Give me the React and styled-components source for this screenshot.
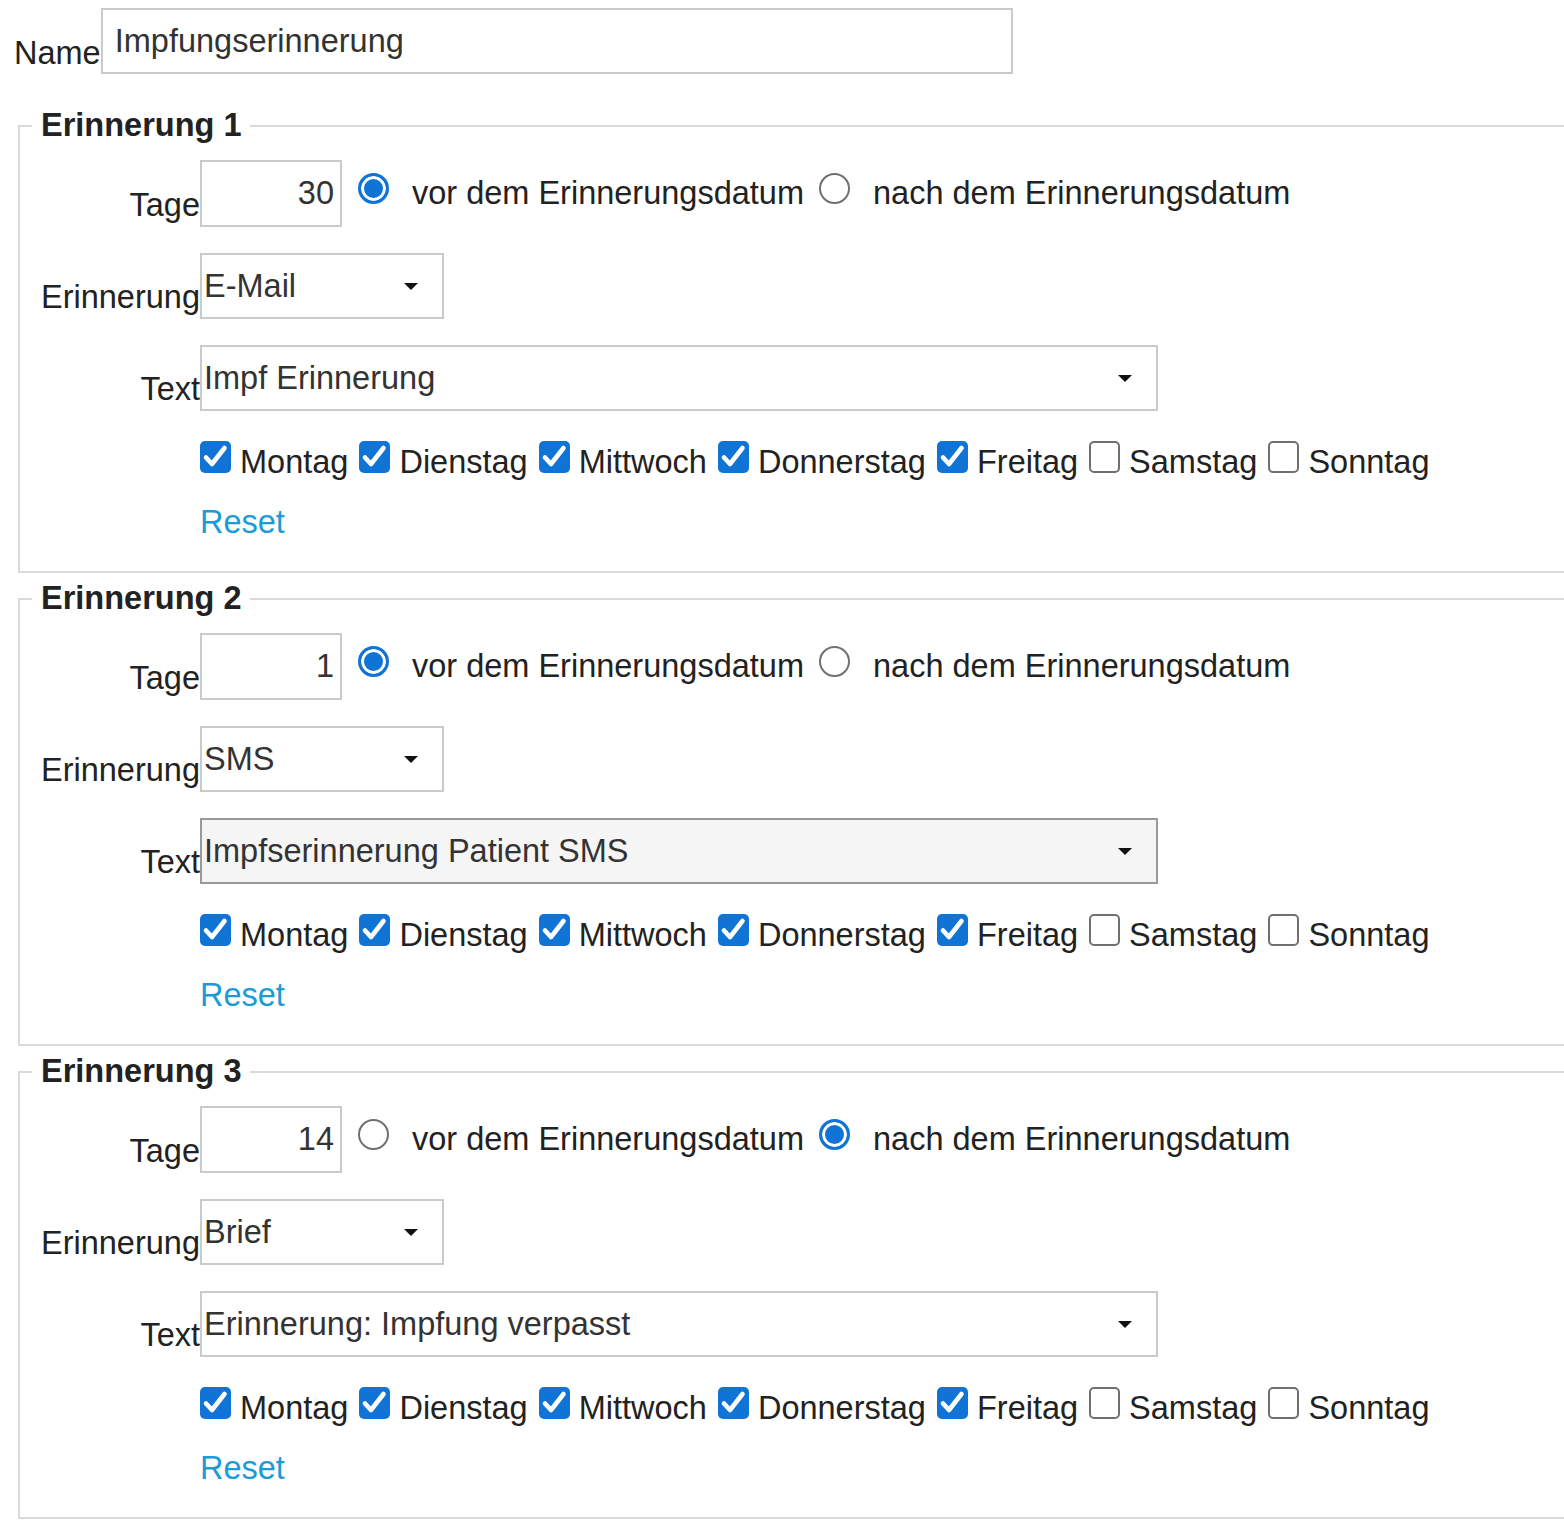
import styled, { createGlobalStyle } from "styled-components"

const GlobalStyle = createGlobalStyle`
  html, body {
    margin: 0;
    background: #fff;
  }
  body {
    font-family: "Liberation Sans", Arial, sans-serif;
    font-size: 32.5px;
    color: #222;
  }
`

const Page = styled.div`
  padding: 8px 0 12px 0;
`

const NameRow = styled.div`
  display: flex;
  align-items: flex-end;
  padding-left: 14px;
`

const NameLabel = styled.label`
  padding-bottom: 2px;
`

const TextInput = styled.input`
  box-sizing: border-box;
  width: ${(p) => p.$width}px;
  height: ${(p) => p.$height || 66}px;
  margin: 0;
  border: 2px solid #cacaca;
  padding: ${(p) => (p.$right ? "0 6px 0 0" : "0 0 0 12px")};
  font: inherit;
  color: #333;
  text-align: ${(p) => (p.$right ? "right" : "left")};
  background: #fff;
  outline: none;
`

const Group = styled.fieldset`
  margin: 33px 0 0 18px;
  padding: 16px 0 30px 0;
  border: 2px solid #dadada;
  border-right: 0;
  min-width: 0;
  & + & {
    margin-top: 7px;
  }
`

const Legend = styled.legend`
  margin-left: 12px;
  padding: 0 9px;
  font-weight: bold;
  color: #222;
`

const FormGrid = styled.div`
  display: grid;
  grid-template-columns: 180px auto;
  row-gap: 26px;
  align-items: end;
`

const FieldLabel = styled.label`
  text-align: right;
  padding-bottom: 3px;
`

const ControlRow = styled.div`
  display: flex;
  align-items: center;
`

const Radio = styled.span`
  box-sizing: border-box;
  flex: none;
  width: 31px;
  height: 31px;
  border-radius: 50%;
  margin: 0 ${(p) => p.$after}px 11px ${(p) => p.$before}px;
  border: ${(p) => (p.$checked ? "3px solid #0f74d6" : "2px solid #707070")};
  background: ${(p) => (p.$checked ? "#0f74d6" : "#fff")};
  box-shadow: ${(p) => (p.$checked ? "inset 0 0 0 3px #fff" : "none")};
`

const OptionText = styled.span`
  color: #222;
`

const SelectBox = styled.div`
  box-sizing: border-box;
  width: ${(p) => p.$width}px;
  height: 66px;
  display: flex;
  align-items: center;
  justify-content: space-between;
  padding: 0 24px 0 2px;
  border: 2px solid ${(p) => (p.$active ? "#9a9a9a" : "#cacaca")};
  background: ${(p) => (p.$active ? "#f5f5f5" : "#fff")};
  color: #333;
`

const Caret = styled.span`
  width: 0;
  height: 0;
  border-left: 7px solid transparent;
  border-right: 7px solid transparent;
  border-top: 7px solid #111;
`

const DaysRow = styled.div`
  display: flex;
  align-items: flex-end;
  margin-top: 4px;
`

const Day = styled.label`
  display: flex;
  align-items: flex-end;
  margin-right: 11px;
`

const Box = styled.span`
  box-sizing: border-box;
  flex: none;
  width: 31px;
  height: 32px;
  margin: 0 9px 8px 0;
  border-radius: 5px;
  display: flex;
  align-items: center;
  justify-content: center;
  background: ${(p) => (p.$checked ? "#0f74d6" : "#fff")};
  border: ${(p) => (p.$checked ? "none" : "2px solid #707070")};
`

const ResetLink = styled.a`
  color: #1b9bd7;
  text-decoration: none;
  margin-top: -3px;
  justify-self: start;
  cursor: pointer;
`

const Check = () => (
  <svg width="31" height="32" viewBox="0 0 31 32">
    <path
      d="M6 16.5 L12 23 L24.5 7"
      fill="none"
      stroke="#fff"
      strokeWidth="4.6"
      strokeLinecap="round"
      strokeLinejoin="round"
    />
  </svg>
)

const weekdays = ["Montag", "Dienstag", "Mittwoch", "Donnerstag", "Freitag", "Samstag", "Sonntag"]

const reminders = [
  { days: "30", before: true, channel: "E-Mail", text: "Impf Erinnerung" },
  { days: "1", before: true, channel: "SMS", text: "Impfserinnerung Patient SMS", active: true },
  { days: "14", before: false, channel: "Brief", text: "Erinnerung: Impfung verpasst" },
]

const Reminder = ({ index, item }) => (
  <Group>
    <Legend>Erinnerung {index}</Legend>
    <FormGrid>
      <FieldLabel>Tage</FieldLabel>
      <ControlRow>
        <TextInput $width={142} $height={67} $right readOnly value={item.days} />
        <Radio $checked={item.before} $before={16} $after={23} />
        <OptionText>vor dem Erinnerungsdatum</OptionText>
        <Radio $checked={!item.before} $before={15} $after={23} />
        <OptionText>nach dem Erinnerungsdatum</OptionText>
      </ControlRow>

      <FieldLabel>Erinnerung</FieldLabel>
      <SelectBox $width={244}>
        <span>{item.channel}</span>
        <Caret />
      </SelectBox>

      <FieldLabel>Text</FieldLabel>
      <SelectBox $width={958} $active={item.active}>
        <span>{item.text}</span>
        <Caret />
      </SelectBox>

      <span />
      <DaysRow>
        {weekdays.map((d, i) => (
          <Day key={d}>
            <Box $checked={i < 5}>{i < 5 && <Check />}</Box>
            {d}
          </Day>
        ))}
      </DaysRow>

      <span />
      <ResetLink>Reset</ResetLink>
    </FormGrid>
  </Group>
)

const App = () => {
  return (
    <Page>
      <GlobalStyle />
      <NameRow>
        <NameLabel>Name</NameLabel>
        <TextInput $width={912} readOnly value="Impfungserinnerung" />
      </NameRow>
      {reminders.map((r, i) => (
        <Reminder key={i} index={i + 1} item={r} />
      ))}
    </Page>
  )
}

export default App
